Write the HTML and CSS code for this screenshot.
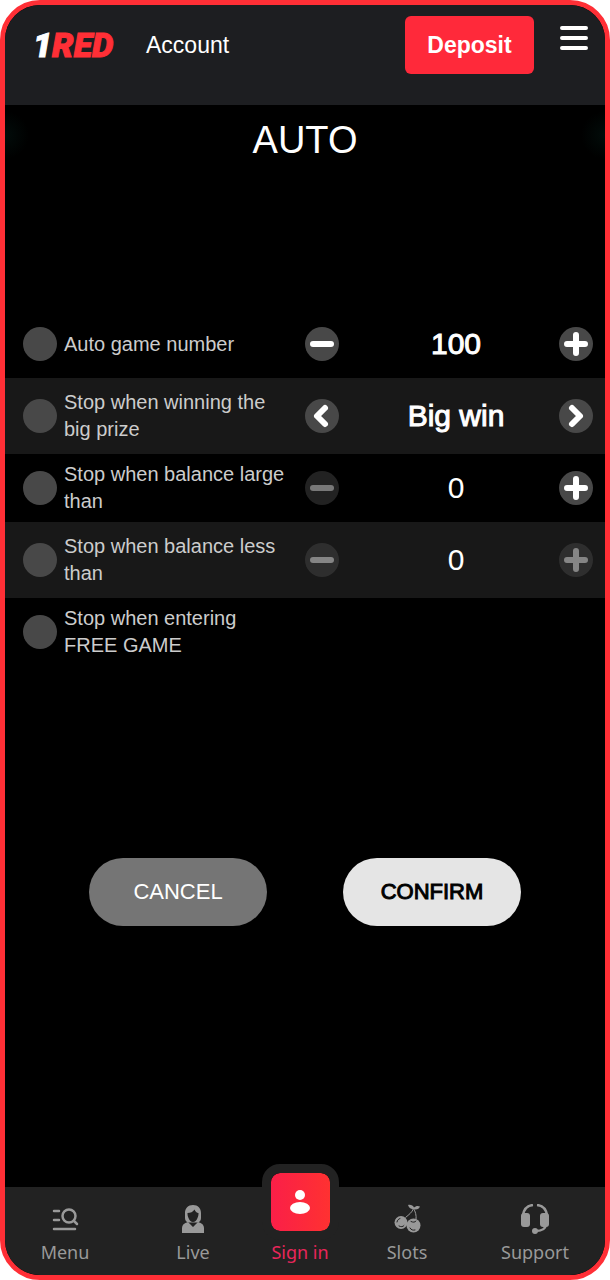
FILE: index.html
```html
<!DOCTYPE html>
<html lang="en">
   <head>
      <meta charset="utf-8">
      <meta name="viewport" content="width=device-width, initial-scale=1">
      <title>1RED - Auto game</title>
      <link rel="stylesheet" href="styles.css">
   </head>
   <body>
      <div class="app">
         <header class="header">
            <a href="#" class="logo"><span>1</span>RED</a>
            <a href="#" class="account">Account</a>
            <button type="button" class="deposit">Deposit</button>
            <button type="button" class="burger" aria-label="Open menu">
               <svg width="28" height="24" viewBox="0 0 28 24" stroke="#fff" stroke-width="4" stroke-linecap="round">
                  <path d="M2 2h24M2 12h24M2 22h24"/>
               </svg>
            </button>
         </header>

         <main class="main">
            <h1>AUTO</h1>
            <form class="settings">
               <div class="row">
                  <input type="checkbox" id="auto-number">
                  <label for="auto-number">Auto game number</label>
                  <div class="stepper">
                     <button type="button" aria-label="Decrease"><svg viewBox="0 0 34 34"><path d="M8 17h18"/></svg></button>
                     <output class="bold">100</output>
                     <button type="button" aria-label="Increase"><svg viewBox="0 0 34 34"><path d="M8 17h18M17 8v18"/></svg></button>
                  </div>
               </div>
               <div class="row">
                  <input type="checkbox" id="big-prize">
                  <label for="big-prize">Stop when winning the big prize</label>
                  <div class="stepper">
                     <button type="button" aria-label="Previous"><svg viewBox="0 0 34 34"><path d="M20 9l-8 8 8 8"/></svg></button>
                     <output class="bold">Big win</output>
                     <button type="button" aria-label="Next"><svg viewBox="0 0 34 34"><path d="M13 9l8 8-8 8"/></svg></button>
                  </div>
               </div>
               <div class="row">
                  <input type="checkbox" id="balance-large">
                  <label for="balance-large">Stop when balance large than</label>
                  <div class="stepper">
                     <button type="button" aria-label="Decrease" disabled><svg viewBox="0 0 34 34"><path d="M8 17h18"/></svg></button>
                     <output>0</output>
                     <button type="button" aria-label="Increase"><svg viewBox="0 0 34 34"><path d="M8 17h18M17 8v18"/></svg></button>
                  </div>
               </div>
               <div class="row">
                  <input type="checkbox" id="balance-less">
                  <label for="balance-less">Stop when balance less than</label>
                  <div class="stepper">
                     <button type="button" aria-label="Decrease" disabled><svg viewBox="0 0 34 34"><path d="M8 17h18"/></svg></button>
                     <output>0</output>
                     <button type="button" aria-label="Increase" disabled><svg viewBox="0 0 34 34"><path d="M8 17h18M17 8v18"/></svg></button>
                  </div>
               </div>
               <div class="row">
                  <input type="checkbox" id="free-game">
                  <label for="free-game">Stop when entering FREE GAME</label>
               </div>
            </form>
            <div class="actions">
               <button type="button" class="cancel">CANCEL</button>
               <button type="button" class="confirm">CONFIRM</button>
            </div>
         </main>

         <nav class="tabs">
            <a href="#" class="tab">
               <svg width="28" height="30" viewBox="0 0 28 30" fill="none" stroke="currentColor" stroke-width="2.500" stroke-linecap="round">
                  <path d="M3 7h5M3 16h5M3 25h21"/>
                  <circle cx="18" cy="12" r="6.500"/>
                  <path d="M23 17l3 3"/>
               </svg>
               Menu
            </a>
            <a href="#" class="tab">
               <svg width="28" height="30" viewBox="0 0 28 30" fill="currentColor">
                  <path fill-rule="evenodd" d="M14 1c5 0 8 3.500 8 8v5c0 2-1 3.500-3 4.500h-10c-2-1-3-2.500-3-4.500V9c0-4.500 3-8 8-8zM8.500 9c0 2 .3 3.500 1 5 1 2.500 2.500 4 4.500 4s3.500-1.500 4.500-4c.7-1.500 1-3 1-5-2-.3-3-1.300-4-3.500-1.500 2.500-4 3.500-7 3.500z"/>
                  <path d="M3 29v-5c0-3 2-5 6-6l5 5 5-5c4 1 6 3 6 6v5z"/>
               </svg>
               Live
            </a>
            <a href="#" class="tab tab-signin">
               <span class="badge">
                  <svg width="24" height="26" viewBox="0 0 24 26" fill="#fff">
                     <circle cx="12" cy="6" r="5"/>
                     <ellipse cx="12" cy="19" rx="10" ry="6"/>
                  </svg>
               </span>
               Sign in
            </a>
            <a href="#" class="tab">
               <svg width="28" height="30" viewBox="0 0 28 30" fill="currentColor">
                  <path d="M15 1c3-.5 5 .5 6 2.500 1.500-1.500 4-2 6-1-1 2.500-3.500 3.500-6.500 2.500C18 5.500 16 4 15 1z"/>
                  <path d="M20.500 4.500c-1.500 4-4.500 6-8 9M20.500 4.500c2 3 3 7 2.500 11" fill="none" stroke="currentColor"/>
                  <circle cx="8" cy="18.500" r="6.500"/>
                  <circle cx="20.500" cy="21.500" r="7"/>
                  <path d="M4 18c.3-2 1.500-3 3-3.500M6 22c2 1 4 1 5-.5M18 17.500c2 1 4 1 5-.5M17 24c1 2 3 2.500 5 2" fill="none" stroke="#222" stroke-linecap="round"/>
               </svg>
               Slots
            </a>
            <a href="#" class="tab">
               <svg width="30" height="30" viewBox="0 0 30 30" fill="currentColor">
                  <path d="M3 11C4 5 8 1.500 13 1M17 1C22 1.500 26 5 27 11M26 20c-.5 5-3.500 7-10 7" fill="none" stroke="currentColor" stroke-width="2.500"/>
                  <rect x="1" y="9" width="9" height="14" rx="3"/>
                  <rect x="20" y="9" width="9" height="14" rx="3"/>
                  <circle cx="15" cy="27" r="3"/>
               </svg>
               Support
            </a>
         </nav>
      </div>
   </body>
</html>
```
FILE: styles.css
```css
* {
   box-sizing: border-box;
}
body {
   margin: 0;
   background: #fff;
   font-family: "Liberation Sans", Arial, sans-serif;
}
button {
   border: 0;
   padding: 0;
   font-family: inherit;
   cursor: pointer;
}
a {
   text-decoration: none;
}
svg {
   display: block;
}
.app {
   display: flex;
   flex-direction: column;
   min-height: 100vh;
   border: 5px solid #ff2f36;
   border-radius: 40px;
   background: #000;
   overflow: hidden;
}

/* header */
.header {
   display: flex;
   align-items: flex-start;
   height: 100px;
   padding: 11px 17px 0 28px;
   background: #1d1e21;
}
.logo {
   width: 78px;
   margin-right: 35px;
   color: #ff2f36;
   font: italic 900 34px/58px Roboto, "Liberation Sans", sans-serif;
   -webkit-text-stroke: 1px #ff2f36;
}
.logo span {
   color: #fff;
   -webkit-text-stroke: 1px #fff;
}
.account {
   color: #fff;
   font-size: 23px;
   line-height: 58px;
}
.deposit {
   width: 129px;
   height: 58px;
   margin-left: auto;
   border-radius: 6px;
   background: #ff293a;
   color: #fff;
   font-size: 23px;
   font-weight: bold;
}
.burger {
   margin: 10px 0 0 26px;
   background: none;
}

/* auto play settings */
.main {
   flex: 1;
   background:
      radial-gradient(circle at 0 30px, #020c0a, transparent 24px),
      radial-gradient(circle at 100% 30px, #020c0a, transparent 24px);
}
h1 {
   margin: 0;
   padding-top: 13px;
   color: #fff;
   font-size: 38px;
   font-weight: normal;
   line-height: 44px;
   text-align: center;
}
.settings {
   margin-top: 148px;
}
.row {
   display: grid;
   grid-template-columns: 34px 13fr 16fr;
   column-gap: 7px;
   align-items: center;
   height: 68px;
   padding: 0 12px 0 18px;
}
.row:nth-child(even) {
   height: 76px;
   background: #181818;
}
.row label {
   padding-right: 8px;
   color: #ccc;
   font-size: 20px;
   line-height: 27px;
}
.row input {
   appearance: none;
   width: 34px;
   height: 34px;
   margin: 0;
   border-radius: 50%;
   background: #484848;
}
.row input:checked {
   background: #e5e5e5;
}
.stepper {
   display: flex;
   align-items: center;
   justify-content: space-between;
}
.stepper button {
   width: 34px;
   height: 34px;
   border-radius: 50%;
   background: #484848;
}
.stepper button:disabled {
   opacity: .47;
}
.stepper path {
   fill: none;
   stroke: #fff;
   stroke-width: 6;
   stroke-linecap: round;
   stroke-linejoin: round;
}
.stepper output {
   flex: 1;
   padding-left: 14px;
   color: #fff;
   font-size: 30px;
   line-height: 34px;
   text-align: center;
}
.stepper .bold {
   -webkit-text-stroke: 1px #fff;
}
.actions {
   display: flex;
   justify-content: center;
   gap: 76px;
   margin: 192px 0 40px;
}
.actions button {
   width: 178px;
   height: 68px;
   border-radius: 34px;
   font-size: 22px;
}
.cancel {
   background: #757575;
   color: #fff;
}
.confirm {
   background: #e5e5e5;
   color: #000;
   -webkit-text-stroke: 1px #000;
}

/* bottom tabs */
.tabs {
   display: grid;
   grid-template-columns: 15fr 17fr 78px 17fr 15fr;
   height: 88px;
   padding-right: 10px;
   background: #222;
}
.tab {
   display: flex;
   flex-direction: column;
   align-items: center;
   gap: 6px;
   padding-top: 17px;
   color: #999;
   font-family: "Noto Sans", sans-serif;
   font-size: 18px;
   line-height: 24px;
}
.tab-signin {
   gap: 0;
   margin-top: -23px;
   padding-top: 0;
   color: #e8265a;
}
.badge {
   display: flex;
   align-items: center;
   justify-content: center;
   width: 77px;
   height: 76px;
   border: 9px solid #222;
   border-radius: 18px;
   background: linear-gradient(90deg, #fa1f48, #ff3131) padding-box;
}
```
